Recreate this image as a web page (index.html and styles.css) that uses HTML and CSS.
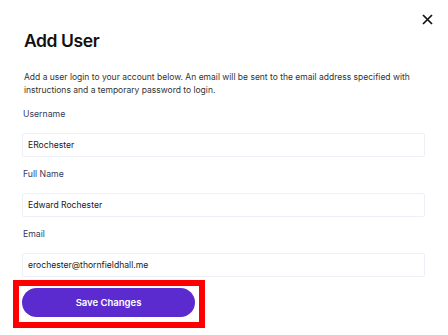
FILE: index.html
```html
<!DOCTYPE html>
<html>
<head>
<meta charset="utf-8">
<link rel="stylesheet" href="styles.css">
</head>
<body>
<div class="modal">
  <button class="close" aria-label="Close">
    <svg width="11" height="11" viewBox="0 0 11 11"><path d="M1 1 L10 10 M10 1 L1 10" stroke="#111" stroke-width="1.7" fill="none"/></svg>
  </button>
  <h1 class="title">Add User</h1>
  <p class="desc">Add a user login to your account below. An email will be sent to the email address specified with instructions and a temporary password to login.</p>
  <div class="field">
    <label class="label">Username</label>
    <div class="input">ERochester</div>
  </div>
  <div class="field">
    <label class="label">Full Name</label>
    <div class="input">Edward Rochester</div>
  </div>
  <div class="field">
    <label class="label">Email</label>
    <div class="input">erochester@thornfieldhall.me</div>
  </div>
  <div class="highlight">
    <button class="save">Save Changes</button>
  </div>
</div>
</body>
</html>
```
FILE: styles.css
```css
html, body {
  margin: 0;
  padding: 0;
  background: #ffffff;
}
body {
  font-family: Inter, "Noto Sans", sans-serif;
  width: 448px;
  height: 335px;
  overflow: hidden;
}
.modal {
  position: relative;
  padding: 30px 23px 0 22px;
}
.close {
  position: absolute;
  top: 14px;
  left: 422px;
  width: 11px;
  height: 11px;
  padding: 0;
  border: 0;
  background: none;
  display: block;
}
.close svg { display: block; }
.title {
  margin: 0 0 19px 2px;
  font-size: 17.5px;
  line-height: 22px;
  letter-spacing: -0.4px;
  font-weight: 600;
  color: #111111;
}
.desc {
  margin: 0 0 0 2px;
  font-size: 8.5px;
  line-height: 13px;
  color: #333333;
}
.field {
  display: flex;
  flex-direction: column;
  margin-top: 11px;
}
.label {
  font-size: 8.7px;
  line-height: 13px;
  color: #343a5c;
  margin-left: 1px;
  margin-bottom: 12px;
}
.input {
  height: 22px;
  border: 1px solid #edf0f6;
  border-radius: 2px;
  padding: 0 5px;
  font-size: 8.6px;
  line-height: 22px;
  color: #1a1a1a;
}
.highlight {
  display: inline-block;
  margin: 3px 0 0 -9px;
  border: 6px solid #ff0000;
  padding: 2px 4px 5px 3px;
}
.save {
  display: block;
  width: 173px;
  height: 29px;
  border: 0;
  border-radius: 15px;
  background: #5c2bcf;
  color: #ffffff;
  font-family: Inter, "Noto Sans", sans-serif;
  font-size: 9.5px;
  font-weight: 600;
  padding: 0;
}
```
